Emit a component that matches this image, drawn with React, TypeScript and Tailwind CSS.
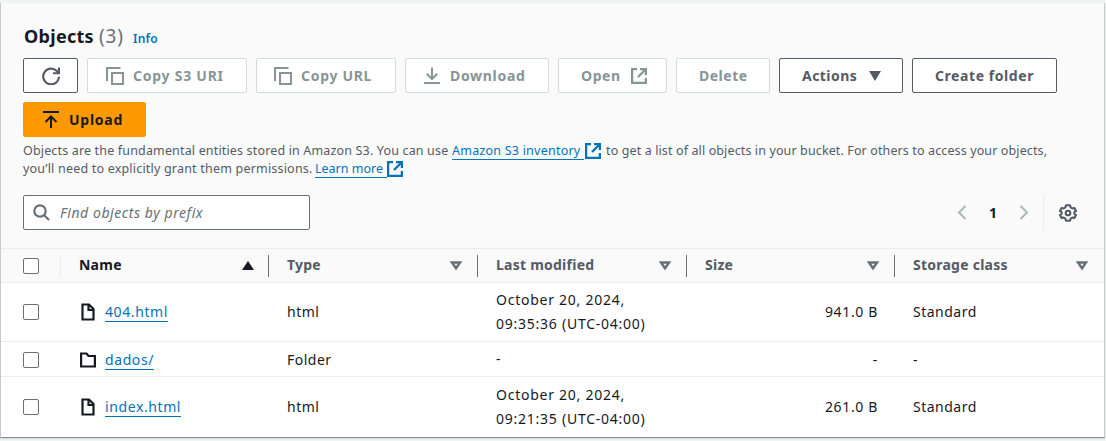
import type { ReactNode } from "react";

const COLS = "grid grid-cols-[60px_208px_209px_209px_208px_210px]";

function RefreshIcon() {
  return (
    <svg width="18" height="18" viewBox="0 0 16 16" fill="none" stroke="currentColor" strokeWidth="1.9">
      <path d="M15.1 8.6A7 7 0 1 1 13 3.4L15 5.4" />
      <path d="M15.1 .4V5.6H9.8" />
    </svg>
  );
}

function CopyIcon() {
  return (
    <svg width="18" height="18" viewBox="0 0 18 18" fill="none" stroke="currentColor" strokeWidth="2">
      <path d="M14.5 1H1V14" />
      <path d="M6 6H17V17H6Z" />
    </svg>
  );
}

function DownloadIcon() {
  return (
    <svg width="16" height="18" viewBox="0 0 16 18" fill="none" stroke="currentColor" strokeWidth="2">
      <path d="M0 16H16M8 .5V12M2.8 6.8L8 12L13.2 6.8" />
    </svg>
  );
}

function UploadIcon() {
  return (
    <svg width="16" height="17" viewBox="0 0 16 17" fill="none" stroke="currentColor" strokeWidth="2">
      <path d="M0 1H16M8 17V5.5M2.5 11L8 5.5L13.5 11" />
    </svg>
  );
}

function ExternalIcon() {
  return (
    <svg className="shrink-0" width="16" height="16" viewBox="0 0 16 16" fill="none" stroke="currentColor" strokeWidth="2.3">
      <path d="M6 1.1H1.1V14.9H14.9V10M9 1.1H14.9V7M14.5 1.5L7 9" />
    </svg>
  );
}

function Chevron({ flip }: { flip?: boolean }) {
  return (
    <svg width="10" height="15" viewBox="0 0 10 15" fill="none" stroke="#aab7b8" strokeWidth="2">
      {flip ? <path d="M1.5 1L8 7.5L1.5 14" /> : <path d="M8.5 1L2 7.5L8.5 14" />}
    </svg>
  );
}

function GearIcon() {
  return (
    <svg width="18" height="18" viewBox="0 0 18 18" fill="none" stroke="#545b64" strokeWidth="2.1" strokeLinejoin="round">
      <path d="M7 1.3H11L11.6 3.4L13.3 4.4L15.4 3.9L17 7L15.4 8.2V9.8L17 11L15.4 14.1L13.3 13.6L11.6 14.6L11 16.7H7L6.4 14.6L4.7 13.6L2.6 14.1L1 11L2.6 9.8V8.2L1 7L2.6 3.9L4.7 4.4L6.4 3.4Z" />
      <circle cx="9" cy="9" r="2.3" />
    </svg>
  );
}

function FileIcon() {
  return (
    <svg width="16" height="18" viewBox="0 0 16 18" fill="none" stroke="#16191f" strokeWidth="2.2">
      <path d="M2.5 1.5H9L13.5 6V16.5H2.5Z" />
      <path d="M8.5 1.5V7H13.5" />
    </svg>
  );
}

function FolderIcon() {
  return (
    <svg width="16" height="16" viewBox="0 0 16 16" fill="none" stroke="#16191f" strokeWidth="2.2">
      <path d="M1.1 1.5H6.5L8.5 4H14.9V14.5H1.1Z" />
    </svg>
  );
}

function SortIcon({ active }: { active?: boolean }) {
  return active ? (
    <svg className="-mr-px" width="12" height="9" viewBox="0 0 12 9" fill="#16191f">
      <path d="M6 0L12 9H0Z" />
    </svg>
  ) : (
    <svg width="12" height="10" viewBox="0 0 12 10" fill="none" stroke="#687078" strokeWidth="2.4">
      <path d="M2 1.5H10L6 7.3Z" />
    </svg>
  );
}

function Button({ className, children }: { className: string; children: ReactNode }) {
  return (
    <button className={`flex h-[35px] shrink-0 items-center rounded-[2px] border text-[14px] font-bold whitespace-nowrap ${className}`}>
      {children}
    </button>
  );
}

const OFF = "border-[#d5dbdb] bg-white text-[#879596]";
const ON = "border-[#545b64] bg-white text-[#545b64]";

function Checkbox() {
  return <span className="block size-4 rounded-[2px] border border-[#687078] bg-white" />;
}

function HeaderCell({ label, active, last }: { label: string; active?: boolean; last?: boolean }) {
  return (
    <div className="flex items-center">
      <div className={`flex flex-1 items-center justify-between pl-[18px] ${last ? "pr-[17px]" : "pr-[15px]"}`}>
        <span className={`pb-[2px] text-[14px] font-bold tracking-[0.24px] ${active ? "text-[#16191f]" : "text-[#545b64]"}`}>{label}</span>
        <SortIcon active={active} />
      </div>
      {!last && <span className="h-[22px] w-px bg-[#687078]" />}
    </div>
  );
}

type Item = { name: string; type: string; modified: string[]; size: string; storage: string; height: string };

const items: Item[] = [
  { name: "404.html", type: "html", modified: ["October 20, 2024,", "09:35:36 (UTC-04:00)"], size: "941.0 B", storage: "Standard", height: "h-[59px] border-b" },
  { name: "dados/", type: "Folder", modified: ["-"], size: "-", storage: "-", height: "h-[35px] border-b pt-px" },
  { name: "index.html", type: "html", modified: ["October 20, 2024,", "09:21:35 (UTC-04:00)"], size: "261.0 B", storage: "Standard", height: "h-[60px]" },
];

export default function App() {
  return (
    <div className="h-[441px] w-[1106px] overflow-hidden bg-[#f2f3f3] pt-[3px] font-['Noto_Sans',sans-serif]">
      <main className="h-[435px] w-[1105px] border-r border-b border-l border-r-[#c5cccc] border-b-[#879596] border-l-[#c5cccc] bg-[#fafafa] shadow-[0_1px_1px_#d5dbdb]">
        <header className="pl-[22px]">
          <div className="flex h-[55px] items-baseline pt-[19px] leading-7">
            <h1 className="w-[76px] pl-px text-[18px] font-bold tracking-[0.3px] text-[#16191f]">Objects</h1>
            <span className="w-[34px] text-[19px] tracking-[0.8px] text-[#687078]">(3)</span>
            <a className="text-[12px] font-semibold tracking-[0.2px] text-[#0073bb]">Info</a>
          </div>
          <div className="flex flex-wrap gap-[9px]">
            <Button className={`w-[55px] justify-center ${ON}`}><RefreshIcon /></Button>
            <Button className={`w-[160px] gap-[9px] pl-[18px] tracking-[0.75px] ${OFF}`}><CopyIcon />Copy S3 URI</Button>
            <Button className={`w-[140px] gap-[9px] pl-[17px] tracking-[0.7px] ${OFF}`}><CopyIcon />Copy URL</Button>
            <Button className={`w-[144px] gap-[10px] pl-[18px] tracking-[0.7px] ${OFF}`}><DownloadIcon />Download</Button>
            <Button className={`w-[109px] gap-[10px] pl-[22px] tracking-[0.6px] ${OFF}`}>Open<ExternalIcon /></Button>
            <Button className={`w-[94px] pl-[22px] tracking-[0.5px] ${OFF}`}>Delete</Button>
            <Button className={`w-[124px] gap-[12px] pl-[22px] tracking-[0.45px] ${ON}`}>
              Actions
              <svg width="12" height="10" viewBox="0 0 12 10" fill="currentColor"><path d="M0 0H12L6 10Z" /></svg>
            </Button>
            <Button className={`w-[145px] pl-[22px] tracking-[0.57px] ${ON}`}>Create folder</Button>
            <Button className="mr-[500px] w-[123px] gap-[10px] border-[#ff9900] bg-[#ff9900] pl-[19px] tracking-[0.75px] text-[#16191f]"><UploadIcon />Upload</Button>
          </div>
          <div className="mt-[5px] text-[12.5px] leading-[18px] whitespace-nowrap text-[#545b64]">
            <p className="flex h-[18px] items-center">
              <span className="w-[429px] tracking-[0.16px]">Objects are the fundamental entities stored in Amazon S3. You can use</span>
              <a className="flex items-center text-[#0073bb]">
                <span className="mr-px h-[17px] w-[132px] border-b border-[#0073bb] leading-[16px] tracking-[0.23px]">Amazon S3 inventory</span>
                <ExternalIcon />
              </a>
              <span className="ml-[5px] tracking-[0.12px]">to get a list of all objects in your bucket. For others to access your objects,</span>
            </p>
            <p className="flex h-[18px] items-center">
              <span className="w-[292px] tracking-[0.2px]">you’ll need to explicitly grant them permissions.</span>
              <a className="flex items-center text-[#0073bb]">
                <span className="h-[17px] w-[72px] border-b border-[#0073bb] leading-[16px]">Learn more</span>
                <ExternalIcon />
              </a>
            </p>
          </div>
          <div className="mt-[17px] flex h-[35px] items-center justify-between">
            <div className="flex h-[35px] w-[287px] items-center gap-[10px] rounded-[2px] border border-[#687078] bg-white pl-[9px]">
              <svg width="17" height="17" viewBox="0 0 17 17" fill="none" stroke="#687078" strokeWidth="2.2">
                <circle cx="7" cy="7" r="5.7" /><path d="M11 11L16 16" />
              </svg>
              <span className="text-[14px] tracking-[0.57px] text-[#687078] italic">Find objects by prefix</span>
            </div>
            <div className="flex items-center pr-[27px]">
              <Chevron />
              <span className="w-[52px] pb-px text-center text-[14px] font-bold text-[#16191f]">1</span>
              <Chevron flip />
              <span className="mr-[15px] ml-[14px] h-[35px] w-px bg-[#eaeded]" />
              <GearIcon />
            </div>
          </div>
        </header>
        <section className="mt-[18px] bg-white text-[14px] text-[#16191f]">
          <div className={`${COLS} h-[35px] border-y border-[#eaeded] bg-[#fafafa]`}>
            <div className="flex items-center justify-between pl-[22px]">
              <Checkbox />
              <span className="h-[22px] w-px bg-[#eaeded]" />
            </div>
            <HeaderCell label="Name" active />
            <HeaderCell label="Type" />
            <HeaderCell label="Last modified" />
            <HeaderCell label="Size" />
            <HeaderCell label="Storage class" last />
          </div>
          {items.map((item) => (
            <div key={item.name} className={`${COLS} ${item.height} items-center border-[#eaeded]`}>
              <div className="pl-[22px]"><Checkbox /></div>
              <div className="flex items-center gap-[9px] pl-[19px]">
                {item.type === "Folder" ? <FolderIcon /> : <FileIcon />}
                <a className="h-[20px] border-b border-[#0073bb] leading-[19px] tracking-[0.6px] text-[#0073bb]">{item.name}</a>
              </div>
              <div className="pb-px pl-[18px] tracking-[0.5px]">{item.type}</div>
              <div className="pl-[18px] leading-[24.5px] tracking-[0.75px] whitespace-nowrap">
                {item.modified.map((line) => <div key={line}>{line}</div>)}
              </div>
              <div className="pr-[17px] pb-px text-right tracking-[0.65px]">{item.size}</div>
              <div className="pb-px pl-[18px] tracking-[0.5px]">{item.storage}</div>
            </div>
          ))}
        </section>
      </main>
    </div>
  );
}
